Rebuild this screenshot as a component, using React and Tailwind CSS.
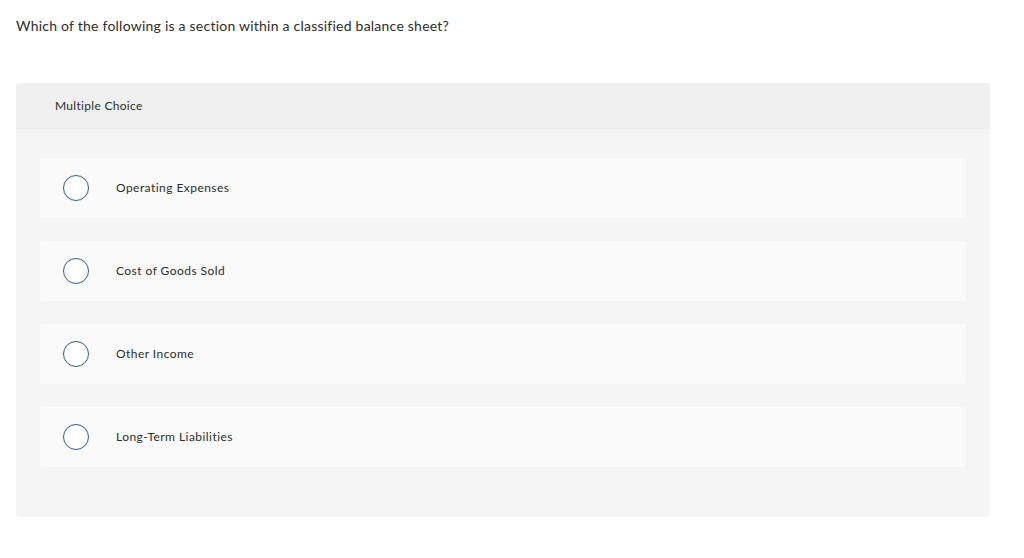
export default function App() {
  const options = [
    "Operating Expenses",
    "Cost of Goods Sold",
    "Other Income",
    "Long-Term Liabilities",
  ];
  return (
    <div
      className="w-[1024px] h-[558px] bg-white text-[#333]"
      style={{ fontFamily: "Lato, 'Liberation Sans', sans-serif", fontVariantLigatures: "none" }}
    >
      <div className="px-4 pt-[17px]">
        <p className="text-[14px] leading-[18px] tracking-[0.23px] text-[#2d2d2d]">
          Which of the following is a section within a classified balance sheet?
        </p>
      </div>
      <div className="ml-4 w-[974px] mt-[48px] rounded-[3px] bg-[#f5f5f5] h-[434px]">
        <div className="h-[46px] bg-[#f0f0f0] rounded-t-[3px] pl-[39px] flex items-center">
          <span className="text-[12px] tracking-[0.3px] text-[#2d2d2d]">Multiple Choice</span>
        </div>
        <div className="px-6 pt-[29px] flex flex-col gap-[23px]">
          {options.map((o) => (
            <div
              key={o}
              className="h-[60px] bg-[#fafafa] rounded-[3px] flex items-center pl-[23px]"
            >
              <div className="w-[26px] h-[26px] rounded-full border border-[#2c5f8f] bg-white shrink-0" />
              <span className="ml-[27px] text-[12px] tracking-[0.45px] text-[#2d2d2d]">{o}</span>
            </div>
          ))}
        </div>
      </div>
    </div>
  );
}
